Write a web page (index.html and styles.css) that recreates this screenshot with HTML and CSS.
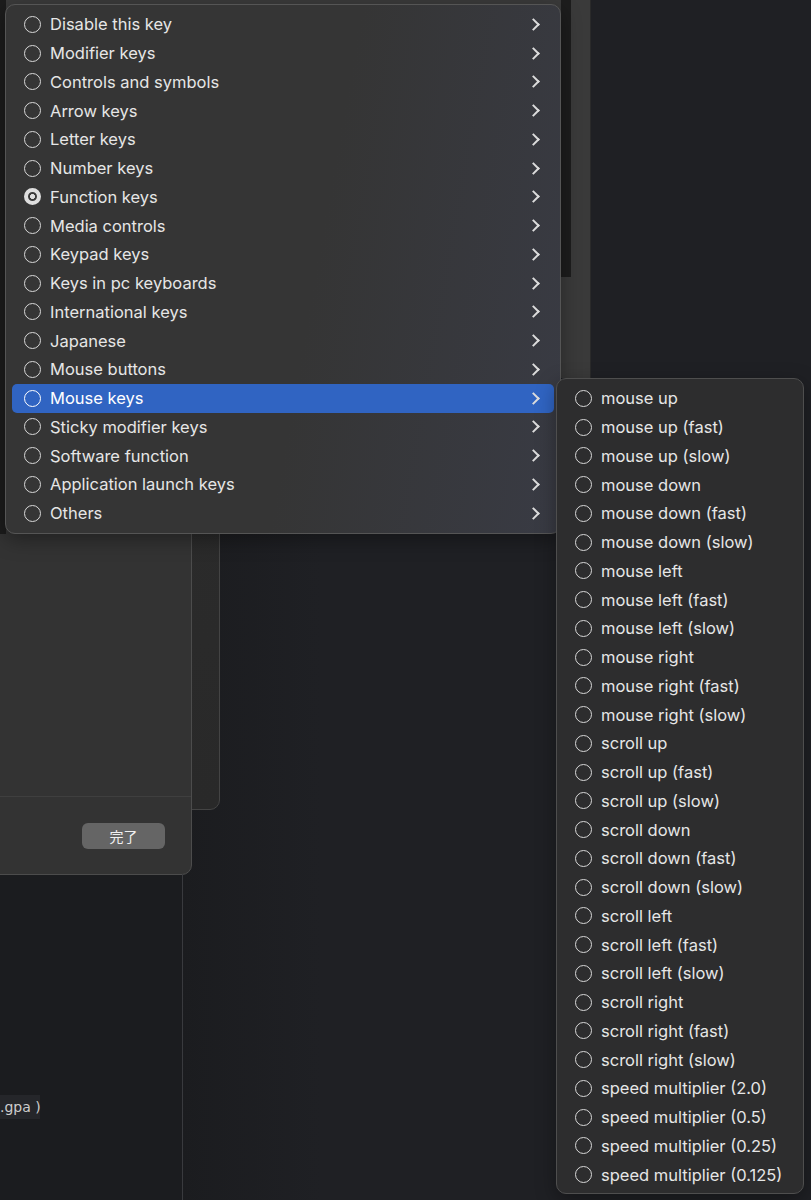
FILE: index.html
```html
<!doctype html>
<html lang="en">
    <head>
        <title>Mouse keys menu</title>
        <link rel="stylesheet" href="styles.css">
    </head>
    <body>
        <div class="desk">
            <!-- windows behind the menus -->
            <div class="win-top"></div>
            <div class="scroll-dark"></div>
            <div class="panel-back"></div>
            <div class="sheet">
                <div class="sheet-body"></div>
                <div class="sheet-foot">
                    <button class="done">完了</button>
                </div>
            </div>
            <div class="edge-left"></div>
            <div class="split-line"></div>
            <div class="code-line">.gpa )</div>

            <!-- main menu -->
            <ul class="menu main-menu">
                <li class="item"><span class="radio"></span><span class="label">Disable this key</span><span class="chev"></span></li>
                <li class="item"><span class="radio"></span><span class="label">Modifier keys</span><span class="chev"></span></li>
                <li class="item"><span class="radio"></span><span class="label">Controls and symbols</span><span class="chev"></span></li>
                <li class="item"><span class="radio"></span><span class="label">Arrow keys</span><span class="chev"></span></li>
                <li class="item"><span class="radio"></span><span class="label">Letter keys</span><span class="chev"></span></li>
                <li class="item"><span class="radio"></span><span class="label">Number keys</span><span class="chev"></span></li>
                <li class="item"><span class="radio on"></span><span class="label">Function keys</span><span class="chev"></span></li>
                <li class="item"><span class="radio"></span><span class="label">Media controls</span><span class="chev"></span></li>
                <li class="item"><span class="radio"></span><span class="label">Keypad keys</span><span class="chev"></span></li>
                <li class="item"><span class="radio"></span><span class="label">Keys in pc keyboards</span><span class="chev"></span></li>
                <li class="item"><span class="radio"></span><span class="label">International keys</span><span class="chev"></span></li>
                <li class="item"><span class="radio"></span><span class="label">Japanese</span><span class="chev"></span></li>
                <li class="item"><span class="radio"></span><span class="label">Mouse buttons</span><span class="chev"></span></li>
                <li class="item active"><span class="radio"></span><span class="label">Mouse keys</span><span class="chev"></span></li>
                <li class="item"><span class="radio"></span><span class="label">Sticky modifier keys</span><span class="chev"></span></li>
                <li class="item"><span class="radio"></span><span class="label">Software function</span><span class="chev"></span></li>
                <li class="item"><span class="radio"></span><span class="label">Application launch keys</span><span class="chev"></span></li>
                <li class="item"><span class="radio"></span><span class="label">Others</span><span class="chev"></span></li>
            </ul>

            <!-- submenu -->
            <ul class="menu sub-menu">
                <li class="item"><span class="radio"></span><span class="label">mouse up</span></li>
                <li class="item"><span class="radio"></span><span class="label">mouse up (fast)</span></li>
                <li class="item"><span class="radio"></span><span class="label">mouse up (slow)</span></li>
                <li class="item"><span class="radio"></span><span class="label">mouse down</span></li>
                <li class="item"><span class="radio"></span><span class="label">mouse down (fast)</span></li>
                <li class="item"><span class="radio"></span><span class="label">mouse down (slow)</span></li>
                <li class="item"><span class="radio"></span><span class="label">mouse left</span></li>
                <li class="item"><span class="radio"></span><span class="label">mouse left (fast)</span></li>
                <li class="item"><span class="radio"></span><span class="label">mouse left (slow)</span></li>
                <li class="item"><span class="radio"></span><span class="label">mouse right</span></li>
                <li class="item"><span class="radio"></span><span class="label">mouse right (fast)</span></li>
                <li class="item"><span class="radio"></span><span class="label">mouse right (slow)</span></li>
                <li class="item"><span class="radio"></span><span class="label">scroll up</span></li>
                <li class="item"><span class="radio"></span><span class="label">scroll up (fast)</span></li>
                <li class="item"><span class="radio"></span><span class="label">scroll up (slow)</span></li>
                <li class="item"><span class="radio"></span><span class="label">scroll down</span></li>
                <li class="item"><span class="radio"></span><span class="label">scroll down (fast)</span></li>
                <li class="item"><span class="radio"></span><span class="label">scroll down (slow)</span></li>
                <li class="item"><span class="radio"></span><span class="label">scroll left</span></li>
                <li class="item"><span class="radio"></span><span class="label">scroll left (fast)</span></li>
                <li class="item"><span class="radio"></span><span class="label">scroll left (slow)</span></li>
                <li class="item"><span class="radio"></span><span class="label">scroll right</span></li>
                <li class="item"><span class="radio"></span><span class="label">scroll right (fast)</span></li>
                <li class="item"><span class="radio"></span><span class="label">scroll right (slow)</span></li>
                <li class="item"><span class="radio"></span><span class="label">speed multiplier (2.0)</span></li>
                <li class="item"><span class="radio"></span><span class="label">speed multiplier (0.5)</span></li>
                <li class="item"><span class="radio"></span><span class="label">speed multiplier (0.25)</span></li>
                <li class="item"><span class="radio"></span><span class="label">speed multiplier (0.125)</span></li>
            </ul>
        </div>
    </body>
</html>
```

FILE: styles.css
```css
body {
    margin: 0;
    background: #1f2024;
    font-family: Inter, "Noto Sans", "Noto Sans CJK JP", sans-serif;
    overflow: hidden;
}
.desk {
    position: relative;
    width: 811px;
    height: 1200px;
    overflow: hidden;
    background: linear-gradient(to right, #1b1c1f 180px, #1f2024 320px);
}

/* background windows */
.win-top {
    position: absolute;
    left: 0;
    top: 0;
    width: 590px;
    height: 378px;
    background: #3a3a3a;
    border-right: 1px solid #2a2a2a;
}
.scroll-dark {
    position: absolute;
    left: 561px;
    top: 0;
    width: 10px;
    height: 277px;
    background: #1d1d1d;
}
.panel-back {
    position: absolute;
    left: -12px;
    top: 300px;
    width: 230px;
    height: 508px;
    background: linear-gradient(#2c2c2c, #292929);
    border: 1px solid #444;
    border-radius: 10px;
}
.sheet {
    position: absolute;
    left: -12px;
    top: 300px;
    width: 202px;
    height: 573px;
    background: #333333;
    border: 1px solid #4c4c4c;
    border-radius: 10px;
    display: flex;
    flex-direction: column;
}
.sheet-body {
    flex: 1;
    border-bottom: 1px solid #3f3f3f;
}
.sheet-foot {
    height: 77px;
    display: flex;
    justify-content: flex-end;
    align-items: flex-start;
    padding: 26px 26px 0 0;
    box-sizing: border-box;
}
.done {
    width: 83px;
    height: 26px;
    border: none;
    border-radius: 6px;
    background: #656565;
    color: #f0f0f0;
    font-family: "Noto Sans CJK JP", sans-serif;
    font-size: 14px;
    padding: 0;
}
.edge-left {
    position: absolute;
    left: 0;
    top: 0;
    width: 6px;
    height: 534px;
    background: #1c1c1c;
}
.split-line {
    position: absolute;
    left: 182px;
    top: 874px;
    width: 1px;
    height: 326px;
    background: #393a3e;
}
.code-line {
    position: absolute;
    left: 0;
    top: 1095px;
    width: 40px;
    height: 24px;
    line-height: 24px;
    background: #25262a;
    color: #cdcdcd;
    font-family: "DejaVu Sans", sans-serif;
    font-size: 14px;
    white-space: nowrap;
}

/* menus */
.menu {
    position: absolute;
    list-style-type: none;
    margin: 0;
    padding: 5px 6px;
    box-sizing: border-box;
    border: 1px solid #555;
    border-radius: 10px;
    box-shadow: 0 6px 20px rgba(0, 0, 0, 0.35);
}
.main-menu {
    left: 5px;
    top: 4px;
    width: 556px;
    height: 530px;
    background: linear-gradient(100deg, #353535 55%, #393b44 100%);
}
.sub-menu {
    left: 556px;
    top: 378px;
    width: 248px;
    height: 816px;
    background: #2d2d2e;
    border-color: #4e4e4e;
}
.item {
    display: flex;
    align-items: center;
    height: 28.75px;
    padding: 0 12px;
    border-radius: 5px;
    color: #e6e6e6;
    font-size: 16.5px;
}
.item.active {
    background: #3064c2;
    color: #ffffff;
}
.radio {
    width: 17px;
    height: 17px;
    box-sizing: border-box;
    border: 1.5px solid #d8d8d8;
    border-radius: 50%;
    margin-right: 9px;
    flex-shrink: 0;
}
.active .radio {
    border-color: #ffffff;
}
.radio.on {
    border: 4px solid #dedede;
    background: radial-gradient(circle, #dedede 0 2.2px, #3a3a3a 2.7px);
}
.label {
    flex: 1;
}
.chev {
    width: 7px;
    height: 7px;
    border-top: 2px solid #dcdcdc;
    border-right: 2px solid #dcdcdc;
    transform: rotate(45deg);
    margin-right: 4px;
}
```
